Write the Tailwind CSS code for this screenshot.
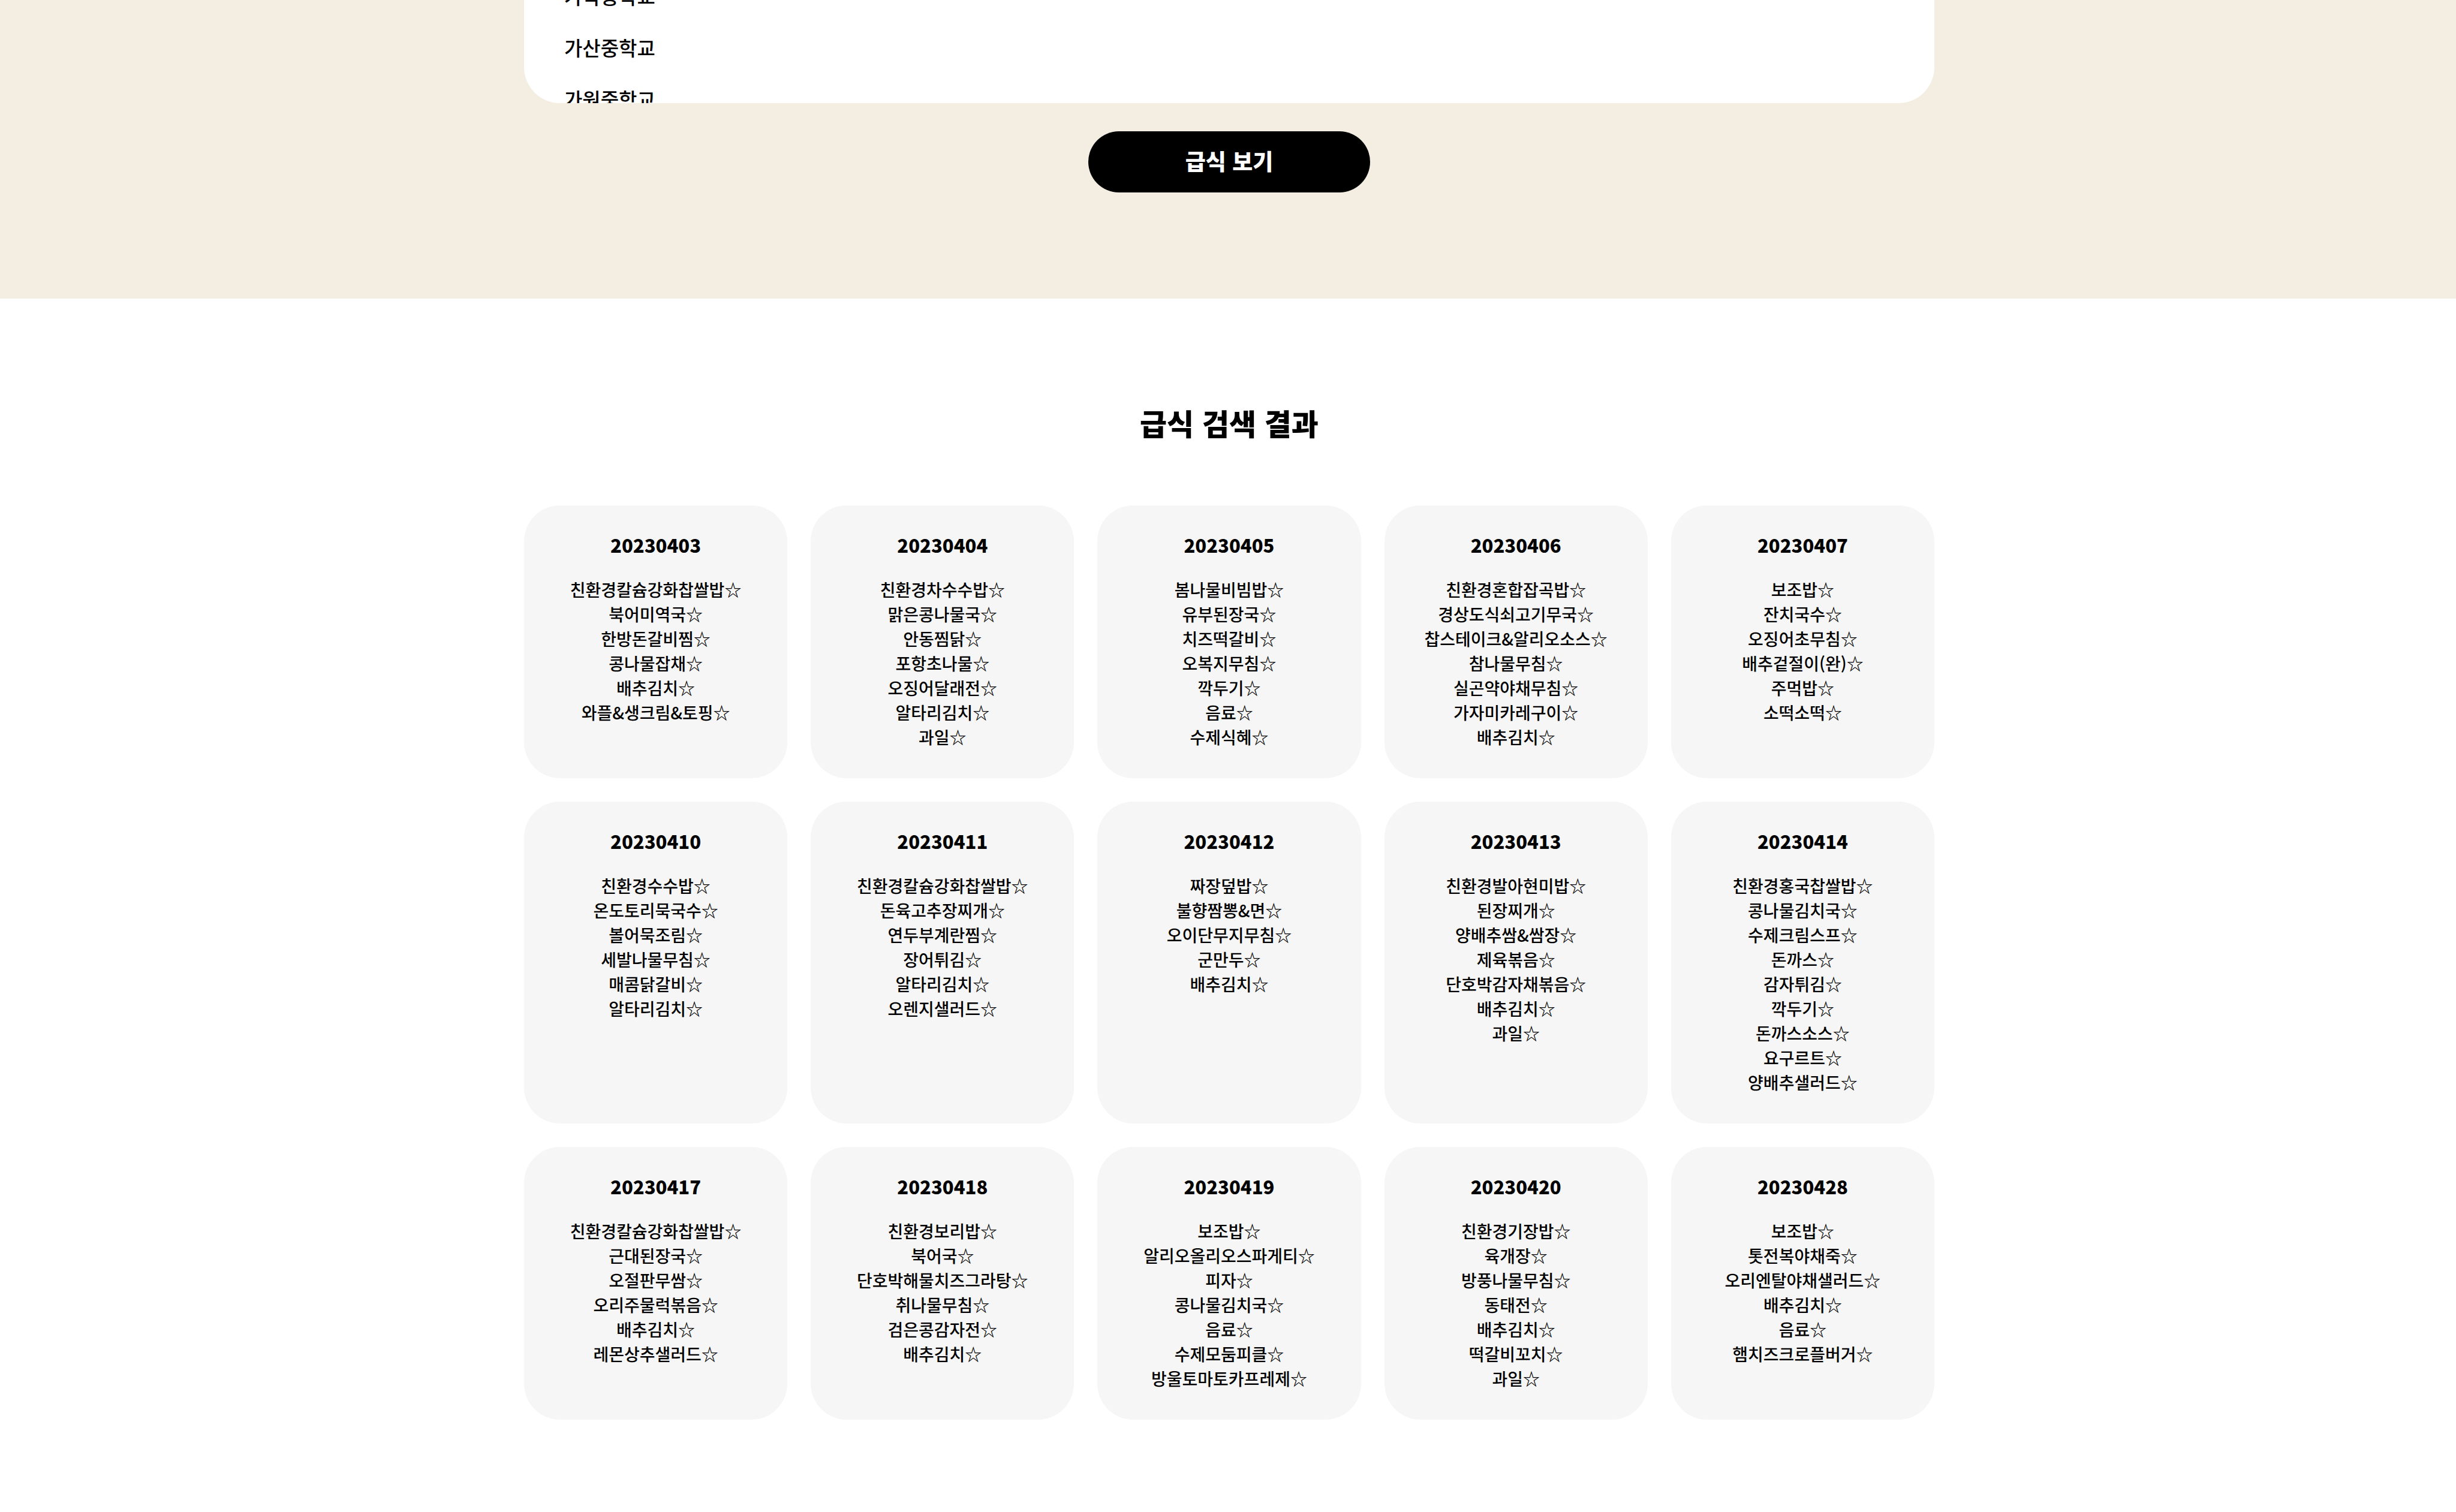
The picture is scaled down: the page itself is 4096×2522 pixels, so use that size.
<!DOCTYPE html>
<html lang="ko">
<head>
<meta charset="utf-8">
<meta name="viewport" content="width=device-width, initial-scale=1">
<title>급식 검색 결과</title>
<script src="https://cdn.jsdelivr.net/npm/@tailwindcss/browser@4"></script>
</head>
<body class="bg-white font-['Noto_Sans_CJK_KR',sans-serif] text-black">
<section class="flex flex-col items-center bg-[#f4ede2] pb-[177px] pl-1">
  <div class="h-[172px] w-full max-w-[2352px] overflow-hidden rounded-b-[60px] bg-white px-[67px]">
    <ul class="-mt-[50px] text-[33px] font-medium leading-[86px]">
      <li><button type="button">가락중학교</button></li>
      <li><button type="button">가산중학교</button></li>
      <li><button type="button">가원중학교</button></li>
    </ul>
  </div>
  <button type="button" class="mt-[47px] h-[102px] w-[470px] rounded-full bg-black pb-1 text-[37px] font-black leading-[48px] text-white">급식 보기</button>
</section>

<main class="flex flex-col items-center pb-[154px] pl-1 pt-[177px]">
  <h1 class="text-[49px] font-black leading-[60px]">급식 검색 결과</h1>
  <div class="mt-[108px] grid w-full max-w-[2352px] grid-cols-5 gap-[39px] text-center *:rounded-[60px] *:bg-[#f6f6f6] *:pb-12 *:pt-[46px] [&_h2]:mb-[34px] [&_h2]:text-[31px] [&_h2]:font-black [&_h2]:leading-10 [&_ul]:text-[28px] [&_ul]:font-medium [&_ul]:leading-[41px]">
    <article>
      <h2>20230403</h2>
      <ul><li>친환경칼슘강화찹쌀밥☆</li><li>북어미역국☆</li><li>한방돈갈비찜☆</li><li>콩나물잡채☆</li><li>배추김치☆</li><li>와플&amp;생크림&amp;토핑☆</li></ul>
    </article>
    <article>
      <h2>20230404</h2>
      <ul><li>친환경차수수밥☆</li><li>맑은콩나물국☆</li><li>안동찜닭☆</li><li>포항초나물☆</li><li>오징어달래전☆</li><li>알타리김치☆</li><li>과일☆</li></ul>
    </article>
    <article>
      <h2>20230405</h2>
      <ul><li>봄나물비빔밥☆</li><li>유부된장국☆</li><li>치즈떡갈비☆</li><li>오복지무침☆</li><li>깍두기☆</li><li>음료☆</li><li>수제식혜☆</li></ul>
    </article>
    <article>
      <h2>20230406</h2>
      <ul><li>친환경혼합잡곡밥☆</li><li>경상도식쇠고기무국☆</li><li>찹스테이크&amp;알리오소스☆</li><li>참나물무침☆</li><li>실곤약야채무침☆</li><li>가자미카레구이☆</li><li>배추김치☆</li></ul>
    </article>
    <article>
      <h2>20230407</h2>
      <ul><li>보조밥☆</li><li>잔치국수☆</li><li>오징어초무침☆</li><li>배추겉절이(완)☆</li><li>주먹밥☆</li><li>소떡소떡☆</li></ul>
    </article>
    <article>
      <h2>20230410</h2>
      <ul><li>친환경수수밥☆</li><li>온도토리묵국수☆</li><li>볼어묵조림☆</li><li>세발나물무침☆</li><li>매콤닭갈비☆</li><li>알타리김치☆</li></ul>
    </article>
    <article>
      <h2>20230411</h2>
      <ul><li>친환경칼슘강화찹쌀밥☆</li><li>돈육고추장찌개☆</li><li>연두부계란찜☆</li><li>장어튀김☆</li><li>알타리김치☆</li><li>오렌지샐러드☆</li></ul>
    </article>
    <article>
      <h2>20230412</h2>
      <ul><li>짜장덮밥☆</li><li>불향짬뽕&amp;면☆</li><li>오이단무지무침☆</li><li>군만두☆</li><li>배추김치☆</li></ul>
    </article>
    <article>
      <h2>20230413</h2>
      <ul><li>친환경발아현미밥☆</li><li>된장찌개☆</li><li>양배추쌈&amp;쌈장☆</li><li>제육볶음☆</li><li>단호박감자채볶음☆</li><li>배추김치☆</li><li>과일☆</li></ul>
    </article>
    <article>
      <h2>20230414</h2>
      <ul><li>친환경홍국찹쌀밥☆</li><li>콩나물김치국☆</li><li>수제크림스프☆</li><li>돈까스☆</li><li>감자튀김☆</li><li>깍두기☆</li><li>돈까스소스☆</li><li>요구르트☆</li><li>양배추샐러드☆</li></ul>
    </article>
    <article>
      <h2>20230417</h2>
      <ul><li>친환경칼슘강화찹쌀밥☆</li><li>근대된장국☆</li><li>오절판무쌈☆</li><li>오리주물럭볶음☆</li><li>배추김치☆</li><li>레몬상추샐러드☆</li></ul>
    </article>
    <article>
      <h2>20230418</h2>
      <ul><li>친환경보리밥☆</li><li>북어국☆</li><li>단호박해물치즈그라탕☆</li><li>취나물무침☆</li><li>검은콩감자전☆</li><li>배추김치☆</li></ul>
    </article>
    <article>
      <h2>20230419</h2>
      <ul><li>보조밥☆</li><li>알리오올리오스파게티☆</li><li>피자☆</li><li>콩나물김치국☆</li><li>음료☆</li><li>수제모둠피클☆</li><li>방울토마토카프레제☆</li></ul>
    </article>
    <article>
      <h2>20230420</h2>
      <ul><li>친환경기장밥☆</li><li>육개장☆</li><li>방풍나물무침☆</li><li>동태전☆</li><li>배추김치☆</li><li>떡갈비꼬치☆</li><li>과일☆</li></ul>
    </article>
    <article>
      <h2>20230428</h2>
      <ul><li>보조밥☆</li><li>톳전복야채죽☆</li><li>오리엔탈야채샐러드☆</li><li>배추김치☆</li><li>음료☆</li><li>햄치즈크로플버거☆</li></ul>
    </article>
  </div>
</main>
</body>
</html>
